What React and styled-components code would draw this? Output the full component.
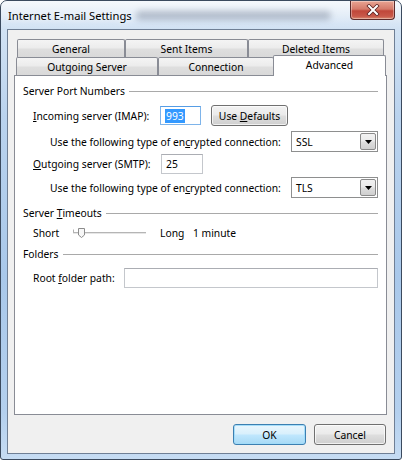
import React from 'react';
import styled, { createGlobalStyle } from 'styled-components';

const Global = createGlobalStyle`
  html, body { margin: 0; padding: 0; background: #fff; }
  body { font-family: "Noto Sans", "Segoe UI", sans-serif; font-size: 10.3px; color: #000; }
  * { box-sizing: border-box; }
`;

const Window = styled.div`
  position: relative;
  width: 402px;
  height: 460px;
  border: 1px solid #3b4a5e;
  border-radius: 7px 7px 3px 3px;
  background: linear-gradient(180deg, #e9f0f8 0%, #d3e3f4 5%, #bad3ee 25%, #a9c8ea 60%, #b4d0ee 90%, #c6dcf3 100%);
  display: flex;
  flex-direction: column;
  padding: 0 6px 5px 6px;
  overflow: hidden;
`;

const TitleBar = styled.div`
  position: relative;
  height: 28px;
  display: flex;
  align-items: center;
  margin: 0 -6px;
  padding: 1px 0 0 7px;
  background: linear-gradient(180deg, rgba(255,255,255,0.55) 0%, rgba(255,255,255,0.25) 50%, rgba(255,255,255,0) 100%);
`;

const Title = styled.span`
  position: relative;
  z-index: 1;
  font-size: 11.2px;
  color: #000;
  text-shadow: 0 0 6px rgba(255,255,255,0.9);
`;

const GlassBlur = styled.div`
  position: absolute;
  left: 135px;
  top: 10px;
  width: 195px;
  height: 9px;
  border-radius: 5px;
  background: rgba(70, 85, 110, 0.32);
  filter: blur(3px);
`;

const CloseButton = styled.div`
  position: absolute;
  top: 0;
  right: 6px;
  width: 45px;
  height: 19px;
  border: 1px solid #5b2a2a;
  border-top: none;
  border-radius: 0 0 4px 4px;
  background: linear-gradient(180deg, #e8a493 0%, #d47a6a 45%, #c0473a 55%, #c8594a 85%, #d98a70 100%);
  box-shadow: inset 0 0 0 1px rgba(255,255,255,0.35);
  display: flex;
  align-items: center;
  justify-content: center;
`;

const Client = styled.div`
  flex: 1;
  display: flex;
  flex-direction: column;
  border: 1px solid #6f7f95;
  background: #f0f0f0;
  padding: 9px 7px 8px 6px;
`;

const TabStrip = styled.div`
  display: flex;
  flex-direction: column;
  height: 36px;
`;

const TabRow = styled.div`
  display: flex;
  height: 18px;
  padding-left: ${p => p.$indent}px;
`;

const Tab = styled.div`
  width: ${p => p.$w}px;
  height: 18px;
  border: 1px solid #898c95;
  border-bottom: none;
  border-radius: 2px 2px 0 0;
  background: linear-gradient(180deg, #f4f4f4 0%, #ececec 45%, #dedede 55%, #d9d9d9 100%);
  display: flex;
  align-items: center;
  justify-content: center;
  padding-top: 1px;
`;

const ActiveTab = styled.div`
  position: relative;
  z-index: 2;
  width: ${p => p.$w}px;
  height: 21px;
  margin-top: -2px;
  margin-left: -1px;
  border: 1px solid #898c95;
  border-bottom: none;
  border-radius: 2px 2px 0 0;
  background: #fff;
  display: flex;
  justify-content: center;
  padding-top: 2px;
`;

const Panel = styled.div`
  position: relative;
  z-index: 1;
  height: 340px;
  border: 1px solid #898c95;
  background: #fff;
  padding: 7px 8px 0 8px;
  display: flex;
  flex-direction: column;
`;

const GroupHeader = styled.div`
  display: flex;
  align-items: center;
  height: 16px;
  gap: 4px;
  margin-top: ${p => p.$mt || 0}px;
`;

const GroupLine = styled.div`
  flex: 1;
  height: 1px;
  background: #a9a9a9;
`;

const Row = styled.div`
  display: flex;
  align-items: center;
  height: ${p => p.$h || 21}px;
  margin-top: ${p => p.$mt || 0}px;
  padding-left: ${p => p.$indent || 10}px;
`;

const Label = styled.span`
  width: ${p => (p.$w ? `${p.$w}px` : 'auto')};
  flex-shrink: 0;
  white-space: nowrap;
`;

const Spacer = styled.div`
  flex: 1;
`;

const TextBox = styled.div`
  width: ${p => p.$w}px;
  height: ${p => p.$h || 20}px;
  border: 1px solid ${p => (p.$focused ? '#7eb4ea' : '#c4c7cc')};
  border-top-color: ${p => (p.$focused ? '#569de5' : '#abadb3')};
  background: #fff;
  display: flex;
  align-items: center;
  padding-left: 4px;
  ${p => (p.$grow ? 'flex: 1;' : '')}
`;

const Selected = styled.span`
  background: #3399ff;
  color: #fff;
  padding: 0 1px;
  line-height: 14px;
`;

const PushButton = styled.div`
  width: ${p => p.$w}px;
  height: 21px;
  margin-left: ${p => p.$ml || 0}px;
  border: 1px solid ${p => (p.$default ? '#3c7fb1' : '#707070')};
  border-radius: 3px;
  background: ${p =>
    p.$default
      ? 'linear-gradient(180deg, #eaf6fd 0%, #d9f0fc 45%, #bee6fd 55%, #a7d9f5 100%)'
      : 'linear-gradient(180deg, #f2f2f2 0%, #ebebeb 45%, #dddddd 55%, #cfcfcf 100%)'};
  box-shadow: inset 0 0 0 1px ${p => (p.$default ? 'rgba(160,220,250,0.9)' : 'rgba(255,255,255,0.7)')};
  display: flex;
  align-items: center;
  justify-content: center;
`;

const Select = styled.div`
  width: 87px;
  height: 21px;
  border: 1px solid #8e8f8f;
  background: #fff;
  display: flex;
  align-items: center;
  padding: 1px;
  padding-left: 4px;
`;

const SelectText = styled.span`
  flex: 1;
`;

const DropButton = styled.div`
  width: 16px;
  height: 17px;
  border: 1px solid #8a8a8a;
  border-radius: 2px;
  background: linear-gradient(180deg, #f2f2f2 0%, #ebebeb 45%, #dddddd 55%, #cfcfcf 100%);
  display: flex;
  align-items: center;
  justify-content: center;
`;

const SliderBox = styled.div`
  width: 74px;
  height: 16px;
  margin-right: 13px;
  flex-shrink: 0;
`;

const ButtonBar = styled.div`
  display: flex;
  justify-content: flex-end;
  gap: 8px;
  margin-top: 9px;
  padding-right: 1px;
`;

const Arrow = () => (
  <svg width="7" height="4" viewBox="0 0 7 4">
    <path d="M0 0 H7 L3.5 4 Z" fill="#000" />
  </svg>
);

const CloseX = () => (
  <svg width="14" height="12" viewBox="0 0 14 12">
    <path d="M3 2 L11 10 M11 2 L3 10" stroke="#5a2020" strokeWidth="3.6" strokeLinecap="square" />
    <path d="M3 2 L11 10 M11 2 L3 10" stroke="#fff" strokeWidth="2" strokeLinecap="square" />
  </svg>
);

const Slider = () => (
  <svg width="74" height="16" viewBox="0 0 74 16">
    <rect x="0" y="7" width="73" height="1" fill="#b5b5b5" />
    <rect x="0" y="8" width="73" height="1" fill="#e6e6e6" />
    <path d="M0.5 4.5 V7" stroke="#b0b0b0" strokeWidth="1" />
    <path d="M5.5 3.5 H11.5 V10 L8.5 12.5 L5.5 10 Z" fill="#f7f7f7" stroke="#8c8c8c" strokeWidth="1" />
  </svg>
);

export default function App() {
  return (
    <>
      <Global />
      <Window>
        <TitleBar>
          <GlassBlur />
          <Title>Internet E-mail Settings</Title>
          <CloseButton>
            <CloseX />
          </CloseButton>
        </TitleBar>
        <Client>
          <TabStrip>
            <TabRow $indent={3}>
              <Tab $w={108}>General</Tab>
              <Tab $w={123}>Sent Items</Tab>
              <Tab $w={136}>Deleted Items</Tab>
            </TabRow>
            <TabRow $indent={2}>
              <Tab $w={142}>Outgoing Server</Tab>
              <Tab $w={116}>Connection</Tab>
              <ActiveTab $w={113}>Advanced</ActiveTab>
            </TabRow>
          </TabStrip>
          <Panel>
            <GroupHeader>
              <span>Server Port Numbers</span>
              <GroupLine />
            </GroupHeader>
            <Row $mt={6}>
              <Label $w={127}><u>I</u>ncoming server (IMAP):</Label>
              <TextBox $w={41} $h={19} $focused>
                <Selected>993</Selected>
              </TextBox>
              <PushButton $w={77} $ml={10}>
                <span>Use <u>D</u>efaults</span>
              </PushButton>
            </Row>
            <Row $mt={5} $indent={27}>
              <Label>Use the following type of en<u>c</u>rypted connection:</Label>
              <Spacer />
              <Select>
                <SelectText>SSL</SelectText>
                <DropButton><Arrow /></DropButton>
              </Select>
            </Row>
            <Row $mt={2} $h={20}>
              <Label $w={128}><u>O</u>utgoing server (SMTP):</Label>
              <TextBox $w={42} $h={20}>25</TextBox>
            </Row>
            <Row $mt={3} $indent={27}>
              <Label>Use the following type of en<u>c</u>rypted connection:</Label>
              <Spacer />
              <Select>
                <SelectText>TLS</SelectText>
                <DropButton><Arrow /></DropButton>
              </Select>
            </Row>
            <GroupHeader $mt={7}>
              <span>Server <u>T</u>imeouts</span>
              <GroupLine />
            </GroupHeader>
            <Row $mt={4} $h={16}>
              <Label $w={40}>Short</Label>
              <SliderBox><Slider /></SliderBox>
              <Label $w={33}>Long</Label>
              <Label>1 minute</Label>
            </Row>
            <GroupHeader $mt={5}>
              <span>Folders</span>
              <GroupLine />
            </GroupHeader>
            <Row $mt={6} $h={20}>
              <Label $w={91}>Root <u>f</u>older path:</Label>
              <TextBox $grow $h={20} />
            </Row>
          </Panel>
          <ButtonBar>
            <PushButton $w={73} $default>OK</PushButton>
            <PushButton $w={72}>Cancel</PushButton>
          </ButtonBar>
        </Client>
      </Window>
    </>
  );
}
